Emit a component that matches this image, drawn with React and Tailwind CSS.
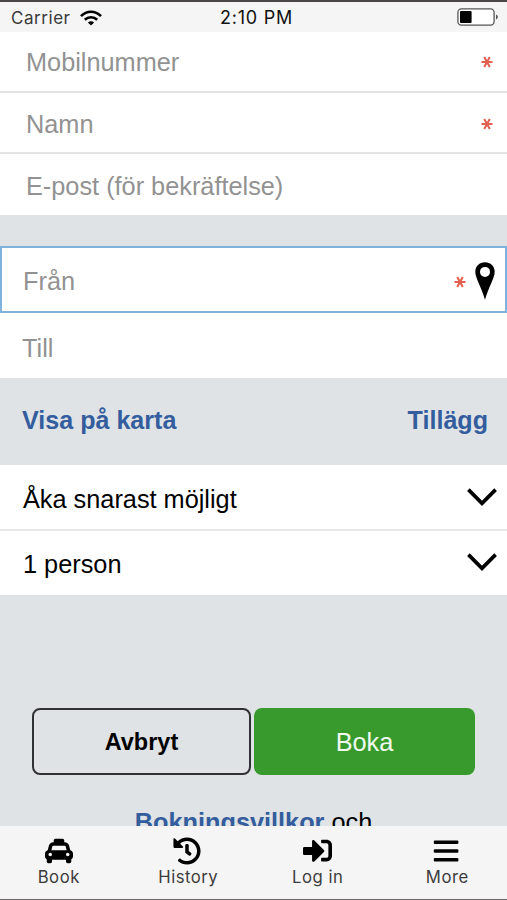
import React, { useState } from 'react';
import { FaTaxi, FaHistory, FaSignInAlt } from "react-icons/fa";

const Required = ({ className }) => (
    <svg viewBox="0 0 12 12" className={`w-3 h-3 shrink-0 ${className}`} fill="none" stroke="#e2604f" strokeWidth="2.1">
        <path d="M0.5 6h11M3.2 1.1l5.6 9.8M8.8 1.1L3.2 10.9" />
    </svg>
);

const Chevron = () => (
    <svg viewBox="0 0 30 20" className="w-[30px] h-5 shrink-0" fill="none" stroke="#000" strokeWidth="3.7">
        <path d="M1.4 2.6L15 16.4L28.6 2.6" />
    </svg>
);

const StatusBar = () => (
    <div className="h-8 shrink-0 flex items-center justify-between bg-[#f5f5f5] border-t-2 border-[#4a4648] pl-[11px] pr-[8px] font-[Inter,sans-serif]">
        <div className="flex items-center w-[130px] pt-px">
            <span className="text-[#3a3a3a] text-[17px] tracking-[0.55px]">Carrier</span>
            <svg viewBox="0 0 22 16" className="w-[22px] h-4 ml-[9px]" fill="none" stroke="#000" strokeWidth="2.7">
                <path d="M1 6.1C6.8 0.3 15.2 0.3 21 6.1" />
                <path d="M4.8 9.8C8.4 6.4 13.6 6.4 17.2 9.8" />
                <path d="M11 15.6L7.9 12.5C9.8 10.9 12.2 10.9 14.1 12.5Z" fill="#000" stroke="none" />
            </svg>
        </div>
        <span className="text-[#111] text-[18px] pt-px pl-[3px] tracking-[0.75px]">2:10 PM</span>
        <div className="w-[130px] flex justify-end">
            <svg viewBox="0 0 42 18" className="w-[42px] h-[18px]">
                <rect x="0.9" y="0.9" width="36.2" height="16.2" rx="3.6" fill="#fff" stroke="#555" strokeWidth="1.3" />
                <rect x="3" y="3" width="11.6" height="12" rx="1" fill="#000" />
                <path d="M39 6.6c2.4 0.7 2.4 4.1 0 4.8z" fill="#555" />
            </svg>
        </div>
    </div>
);

const tabs = [
    { label: "Book", icon: <FaTaxi className="w-[28px] h-[28px]" /> },
    { label: "History", icon: <FaHistory className="w-[28px] h-[28px] -ml-[3px]" /> },
    { label: "Log in", icon: <FaSignInAlt className="w-[29px] h-[29px]" /> },
    {
        label: "More",
        icon: (
            <svg viewBox="0 0 26 24" className="w-[26px] h-6 -ml-[2px]" fill="#000">
                <rect x="0.8" y="1.4" width="24.6" height="3.6" rx="1" />
                <rect x="0.8" y="10.2" width="24.6" height="3.6" rx="1" />
                <rect x="0.8" y="19" width="24.6" height="3.6" rx="1" />
            </svg>
        ),
    },
];

const App = () => {
    const [form, setForm] = useState({ phone: "", name: "", email: "", from: "", to: "" });

    const handleChange = (e) => {
        const { name, value } = e.target;
        setForm({ ...form, [name]: value });
    };

    const field = (name, placeholder, className) => (
        <input
            name={name}
            value={form[name]}
            onChange={handleChange}
            placeholder={placeholder}
            className={`flex-1 min-w-0 h-full outline-none placeholder:text-[#929292] ${className}`}
        />
    );

    return (
        <div className="w-full h-[900px] flex flex-col overflow-hidden bg-[#dfe3e6] text-black text-[25.3px] leading-[30px] font-['Liberation_Sans',sans-serif]">
            <StatusBar />
            <form className="flex-1 min-h-0 overflow-hidden" onSubmit={(e) => e.preventDefault()}>
                <div className="bg-white">
                    <div className="h-[61px] flex items-center border-b-2 border-[#e3e4e5] pl-[26px] pr-[14px]">
                        {field("phone", "Mobilnummer", "pt-[2px]")}
                        <Required className="mt-px" />
                    </div>
                    <div className="h-[61px] flex items-center border-b-2 border-[#e3e4e5] pl-[26px] pr-[14px]">
                        {field("name", "Namn", "pt-[4px]")}
                        <Required className="mt-[3px]" />
                    </div>
                    <div className="h-[61px] flex items-center pl-[26px] pr-[14px]">
                        {field("email", "E-post (för bekräftelse)", "pt-[3px]")}
                    </div>
                </div>

                <div className="mt-[31px] bg-white">
                    <div className="h-[67px] flex items-center border-2 border-[#7fb3dc] pl-[21px] pr-[10px]">
                        {field("from", "Från", "pt-[4px]")}
                        <Required className="mt-[4px]" />
                        <svg viewBox="0 0 20 38" className="w-5 h-[38px] ml-[9px] mt-[2px]">
                            <path fillRule="evenodd" d="M10 0.3C4.4 0.3 0.3 4.4 0.3 9.8C0.3 16 6 24 10 37.7C14 24 19.7 16 19.7 9.8C19.7 4.4 15.6 0.3 10 0.3ZM10 4.9a5 5 0 1 1 0 10a5 5 0 1 1 0-10z" />
                        </svg>
                    </div>
                    <div className="h-[65px] flex items-center pl-[22px] pt-[5px]">
                        {field("to", "Till", "")}
                    </div>
                </div>

                <div className="h-[87px] flex items-start justify-between pt-[27px] pl-[22px] pr-[19px] font-bold text-[25.1px] text-[#345d9d]">
                    <button type="button">Visa på karta</button>
                    <button type="button">Tillägg</button>
                </div>

                <div className="bg-white">
                    <div className="h-[66px] flex items-center justify-between border-b-2 border-[#e6e8e9] pl-[23px] pr-[10px]">
                        <span className="pt-[3px]">Åka snarast möjligt</span>
                        <Chevron />
                    </div>
                    <div className="h-[64px] flex items-center justify-between pl-[23px] pr-[10px] pb-[2px]">
                        <span className="pt-[3px]">1 person</span>
                        <Chevron />
                    </div>
                </div>

                <div className="flex gap-[3px] pt-[113px] pl-8">
                    <button type="button" className="w-[219px] h-[67px] rounded-lg border-2 border-[#303134] font-bold text-[23.5px]">Avbryt</button>
                    <button type="submit" className="w-[221px] h-[67px] rounded-lg bg-[#389a2d] text-[#f2fbef]">Boka</button>
                </div>
                <p className="pt-[32px] text-center">
                    <a className="font-bold text-[#345d9d]">Bokningsvillkor</a> och
                </p>
            </form>

            <nav className="h-[74px] shrink-0 flex -ml-[6px] -mr-[5px] bg-[#f5f5f5] border-b border-[#6d6a6b] font-[Inter,sans-serif] text-[16.7px] leading-5 text-[#3c3c3c]">
                {tabs.map((tab) => (
                    <button key={tab.label} type="button" className="flex-1 flex flex-col items-center pt-2">
                        <span className="h-[33px] flex items-center text-black">{tab.icon}</span>
                        <span className="tracking-[0.5px]">{tab.label}</span>
                    </button>
                ))}
            </nav>
        </div>
    );
};

export default App;
